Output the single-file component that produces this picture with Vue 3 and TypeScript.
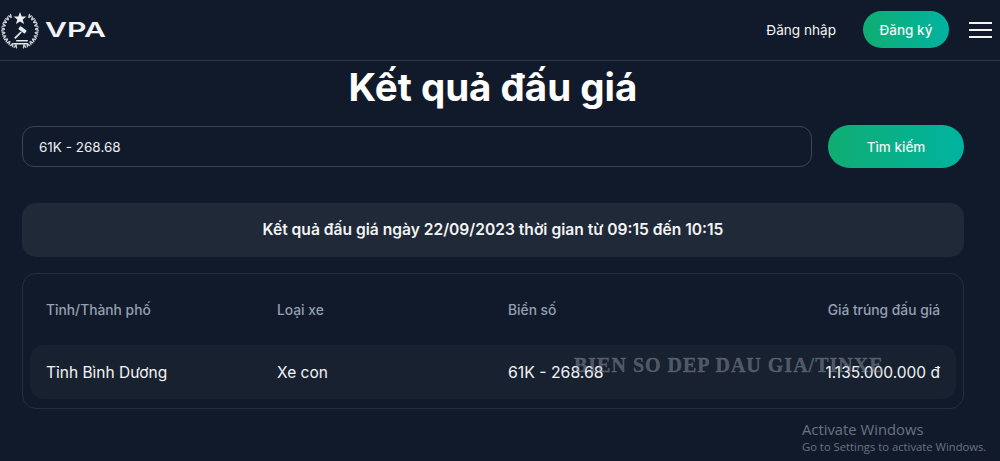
<script setup lang="ts">
import { ref } from 'vue'

const keyword = ref('61K - 268.68')

const columns = ['Tỉnh/Thành phố', 'Loại xe', 'Biển số', 'Giá trúng đấu giá']
const rows = [
  { province: 'Tỉnh Bình Dương', type: 'Xe con', plate: '61K - 268.68', price: '1.135.000.000 đ' }
]

// wreath leaves, left side only; the right side is mirrored in the template
const leaves: string[] = []
for (let a = 125; a <= 255; a += 13) {
  const r = (a * Math.PI) / 180
  const x = 20 + 15.5 * Math.cos(r)
  const y = 30 - 15.5 * Math.sin(r)
  leaves.push(`translate(${x.toFixed(1)} ${y.toFixed(1)}) rotate(${(90 - a + 25).toFixed(0)})`)
  leaves.push(`translate(${x.toFixed(1)} ${y.toFixed(1)}) rotate(${(90 - a - 25).toFixed(0)})`)
}
</script>

<template>
  <div class="page">
    <header class="topbar">
      <div class="brand">
        <svg class="logo" viewBox="0 0 40 60" width="40" height="60">
          <path d="M20 12l1.700 4.400 4.700.2-3.700 2.900 1.300 4.500-4-2.600-4 2.600 1.300-4.500-3.700-2.900 4.700-.2z" fill="#eceef1" />
          <g fill="#c9cdd4">
            <ellipse v-for="(t, i) in leaves" :key="i" :transform="t" cx="0" cy="-1.500" rx="0.800" ry="2.200" />
          </g>
          <g fill="#c9cdd4" transform="matrix(-1 0 0 1 40 0)">
            <ellipse v-for="(t, i) in leaves" :key="i" :transform="t" cx="0" cy="-1.500" rx="0.800" ry="2.200" />
          </g>
          <g fill="#e6e8eb">
            <rect x="18.500" y="28" width="8" height="3.800" rx="0.800" transform="rotate(38 22.500 29.900)" />
            <path d="M20.500 31.500l1.300 1.100-6.300 6.300-1.400-1.200z" />
            <rect x="16" y="40" width="12" height="1.400" rx="0.700" />
            <rect x="13" y="43" width="15" height="1.400" rx="0.700" />
          </g>
        </svg>
        <span class="brand-name">VPA</span>
      </div>
      <nav class="actions">
        <a class="login">Đăng nhập</a>
        <button class="register">Đăng ký</button>
        <button class="menu" aria-label="Menu">
          <span></span><span></span><span></span>
        </button>
      </nav>
    </header>

    <main class="content">
      <h1 class="title">Kết quả đấu giá</h1>

      <form class="search" @submit.prevent>
        <input v-model="keyword" class="search-input" type="text" />
        <button class="search-btn">Tìm kiếm</button>
      </form>

      <div class="banner">Kết quả đấu giá ngày 22/09/2023 thời gian từ 09:15 đến 10:15</div>

      <section class="result">
        <div class="grid head">
          <div v-for="col in columns" :key="col">{{ col }}</div>
        </div>
        <div v-for="row in rows" :key="row.plate" class="grid row">
          <div>{{ row.province }}</div>
          <div>{{ row.type }}</div>
          <div class="plate">{{ row.plate }}</div>
          <div>{{ row.price }}</div>
        </div>
      </section>
    </main>

    <div class="watermark">BIEN SO DEP DAU GIA/TINXE</div>
    <div class="activate">
      <div class="activate-title">Activate Windows</div>
      <div class="activate-sub">Go to Settings to activate Windows.</div>
    </div>
  </div>
</template>

<style>
html,
body {
  margin: 0;
  background: #111a2a;
}
</style>

<style scoped>
.page {
  position: relative;
  height: 461px;
  overflow: hidden;
  background: #111a2a;
  color: #f3f4f6;
  font-family: Inter, "Noto Sans", sans-serif;
}

.topbar {
  display: flex;
  align-items: center;
  justify-content: space-between;
  box-sizing: border-box;
  height: 61px;
  padding: 0 8px 1px 0;
  border-bottom: 1px solid #2b3544;
}

.brand {
  display: flex;
  align-items: center;
  gap: 5px;
}

.brand-name {
  font-size: 20.500px;
  font-weight: 600;
  color: #f1f3f5;
  transform: scaleX(1.47);
  transform-origin: left;
}

.actions {
  display: flex;
  align-items: center;
}

.login {
  font-size: 13.600px;
  color: #f3f4f6;
  margin-right: 27px;
}

.register {
  width: 86px;
  height: 37px;
  margin-right: 20px;
  border: 0;
  border-radius: 19px;
  background: linear-gradient(90deg, #10ad73, #00b3a0);
  color: #f3f4f6;
  font: 500 13.500px Inter, sans-serif;
}

.menu {
  display: flex;
  flex-direction: column;
  justify-content: space-between;
  width: 23px;
  height: 16px;
  padding: 0;
  border: 0;
  background: none;
}

.menu span {
  display: block;
  height: 2px;
  background: #f3f4f6;
}

.content {
  width: 942px;
  margin-left: 22px;
}

.title {
  margin: 0;
  height: 65px;
  font-size: 38.500px;
  line-height: 52px;
  font-weight: 700;
  text-align: center;
  color: #fff;
}

.search {
  display: flex;
  align-items: center;
  gap: 16px;
  margin-bottom: 36px;
}

.search-input {
  flex: 1;
  min-width: 0;
  box-sizing: border-box;
  height: 41px;
  padding: 0 16px;
  border: 1px solid #3b4555;
  border-radius: 12px;
  background: #111a2a;
  color: #eceef1;
  font: 400 13.500px Inter, sans-serif;
  outline: none;
}

.search-btn {
  width: 136px;
  height: 43px;
  margin: -1px 0;
  border: 0;
  border-radius: 22px;
  background: linear-gradient(90deg, #10ad73, #00b3a0);
  color: #f3f4f6;
  font: 500 13.500px Inter, sans-serif;
}

.banner {
  height: 54px;
  margin-bottom: 16px;
  border-radius: 14px;
  background: #1f2937;
  font-size: 15.600px;
  font-weight: 600;
  line-height: 54px;
  text-align: center;
  color: #f3f4f6;
}

.result {
  box-sizing: border-box;
  height: 136px;
  padding: 0 7px;
  border: 1px solid #232d3c;
  border-radius: 14px;
}

.grid {
  display: grid;
  grid-template-columns: 231px 231px 1fr 1fr;
  padding: 0 16px;
  align-items: center;
}

.grid > div:last-child {
  text-align: right;
}

.head {
  height: 71px;
  font-size: 13.800px;
  font-weight: 500;
  color: #94a0b2;
}

.row {
  height: 54px;
  border-radius: 14px;
  background: #182130;
  font-size: 15.500px;
  color: #f3f4f6;
}

.row .plate {
  font-size: 15.800px;
}

.watermark {
  position: absolute;
  left: 574px;
  top: 354px;
  font-family: "Liberation Serif", serif;
  font-size: 20px;
  font-weight: 700;
  letter-spacing: 1px;
  white-space: nowrap;
  color: rgba(160, 170, 180, 0.42);
  -webkit-text-stroke: 0.3px rgba(160, 170, 180, 0.42);
}

.activate {
  position: absolute;
  left: 802px;
  top: 420px;
  font-family: "Open Sans", sans-serif;
  color: #6b7380;
  white-space: nowrap;
}

.activate-title {
  font-size: 14.800px;
  line-height: 18px;
}

.activate-sub {
  font-size: 11.250px;
  line-height: 17px;
}
</style>
